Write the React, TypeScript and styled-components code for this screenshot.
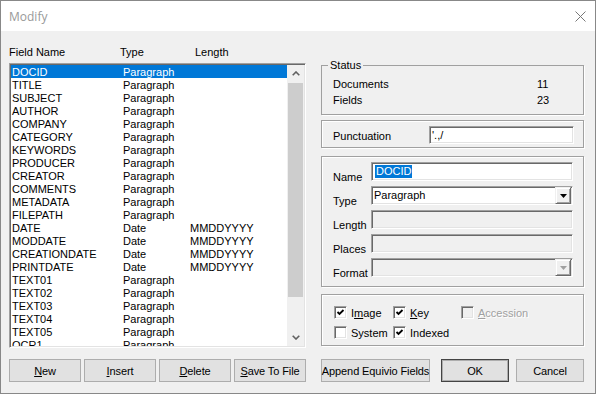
import React from 'react';
import styled, { createGlobalStyle } from 'styled-components';

const GlobalStyle = createGlobalStyle`
  html, body { margin: 0; padding: 0; background: #f0f0f0; }
  body { font-family: "Liberation Sans", Arial, sans-serif; font-size: 11px; color: #000; }
  * { box-sizing: border-box; }
`;

const Window = styled.div`
  width: 596px;
  height: 394px;
  border: 1px solid #888;
  background: #f0f0f0;
  display: flex;
  flex-direction: column;
  overflow: hidden;
`;

const TitleBar = styled.div`
  flex: none;
  height: 30px;
  background: #fff;
  display: flex;
  align-items: center;
  justify-content: space-between;
  padding: 0 9px 0 8px;
`;

const Title = styled.span`
  font-family: "Open Sans", "Noto Sans", sans-serif;
  font-size: 12px;
  color: #999;
`;

const CloseIcon = styled.svg`
  width: 11px;
  height: 11px;
  display: block;
`;

const Body = styled.div`
  flex: 1;
  display: flex;
  gap: 15px;
  padding-left: 8px;
`;

const LeftCol = styled.div`
  width: 297px;
  display: flex;
  flex-direction: column;
  padding-top: 15px;
`;

const RightCol = styled.div`
  width: 263px;
  display: flex;
  flex-direction: column;
  padding-top: 28px;
`;

const HeaderRow = styled.div`
  display: grid;
  grid-template-columns: 111px 75px auto;
  height: 13px;
  line-height: 13px;
`;

const sunken = `
  border: 1px solid;
  border-color: #a0a0a0 #fff #fff #a0a0a0;
  box-shadow: inset 1px 1px 0 #696969, inset -1px -1px 0 #e3e3e3;
`;

const ListBox = styled.div`
  margin-top: 4px;
  height: 285px;
  display: flex;
  background: #fff;
  padding: 1px;
  ${sunken}
`;

const Rows = styled.div`
  flex: 1;
  overflow: hidden;
`;

const Row = styled.div<{ $selected?: boolean }>`
  display: grid;
  grid-template-columns: 111px 67px auto;
  height: 13px;
  line-height: 12px;
  padding: 1px 0 0 1px;
  white-space: nowrap;
  background: ${p => (p.$selected ? '#0078d7' : 'transparent')};
  color: ${p => (p.$selected ? '#fff' : '#000')};
`;

const ScrollBar = styled.div`
  width: 17px;
  flex: none;
  background: #f0f0f0;
  display: flex;
  flex-direction: column;
`;

const ScrollArrow = styled.div`
  height: 17px;
  flex: none;
  display: flex;
  align-items: center;
  justify-content: center;
`;

const Track = styled.div`
  flex: 1;
  padding: 1px 1px 0 1px;
`;

const Thumb = styled.div`
  height: 214px;
  background: #cdcdcd;
`;

const ButtonRow = styled.div<{ $top: number }>`
  display: flex;
  margin-top: ${p => p.$top}px;
`;

const Button = styled.div<{ $w: number; $gap?: number; $default?: boolean }>`
  width: ${p => p.$w}px;
  height: 23px;
  margin-left: ${p => p.$gap ?? 0}px;
  display: flex;
  align-items: center;
  justify-content: center;
  background: #e1e1e1;
  border: 1px solid ${p => (p.$default ? '#444' : '#adadad')};
  box-shadow: ${p => (p.$default ? 'inset 0 0 0 1px #adadad' : 'none')};
  white-space: nowrap;
  letter-spacing: -0.1px;
  &:first-child { margin-left: 0; }
`;

const Group = styled.fieldset`
  margin: 0;
  padding: 0;
  min-width: 0;
  border: 1px solid #a0a0a0;
  box-shadow: 1px 1px 0 #fff;
`;

const Legend = styled.legend`
  margin-left: 6px;
  padding: 0 2px;
  line-height: 13px;
  font-size: 11px;
`;

const StatusGrid = styled.div`
  display: grid;
  grid-template-columns: 204px auto;
  row-gap: 3px;
  line-height: 13px;
  padding: 6px 0 7px 11px;
`;

const Box = styled.div<{ $top: number }>`
  margin-top: ${p => p.$top}px;
  border: 1px solid #a0a0a0;
  box-shadow: 1px 1px 0 #fff, inset 1px 1px 0 #fff;
`;

const PunctRow = styled.div`
  display: flex;
  align-items: center;
  padding: 5px 9px 3px 11px;
`;

const PunctLabel = styled.span`
  width: 96px;
  padding-top: 2px;
`;

const TextBox = styled.div<{ $w?: number; $h: number; $disabled?: boolean }>`
  width: ${p => (p.$w ? p.$w + 'px' : '100%')};
  height: ${p => p.$h}px;
  background: ${p => (p.$disabled ? '#f0f0f0' : '#fff')};
  ${sunken}
  display: flex;
  align-items: center;
  padding: 0 1px 0 2px;
  line-height: 13px;
  white-space: nowrap;
`;

const FieldGrid = styled.div`
  display: grid;
  grid-template-columns: 38px 202px;
  grid-auto-rows: 19px;
  row-gap: 5px;
  padding: 5px 10px 9px 11px;
`;

const FieldLabel = styled.span`
  align-self: end;
  line-height: 13px;
  margin-bottom: -3px;
`;

const Selected = styled.span`
  background: #0078d7;
  color: #fff;
  padding: 0 1px;
  margin-left: 1px;
`;

const ComboText = styled.span`
  flex: 1;
`;

const DropBtn = styled.div`
  width: 16px;
  height: 100%;
  flex: none;
  background: #f0f0f0;
  border: 1px solid;
  border-color: #f0f0f0 #696969 #696969 #f0f0f0;
  box-shadow: inset 1px 1px 0 #fff, inset -1px -1px 0 #a0a0a0;
  display: flex;
  align-items: center;
  justify-content: center;
`;

const CheckGrid = styled.div`
  display: grid;
  grid-template-columns: 59px 68px auto;
  grid-auto-rows: 13px;
  row-gap: 7px;
  padding: 11px 0 6px 12px;
`;

const CheckItem = styled.div<{ $disabled?: boolean }>`
  display: flex;
  align-items: center;
  gap: 4px;
  white-space: nowrap;
  color: ${p => (p.$disabled ? '#a0a0a0' : '#000')};
  text-shadow: ${p => (p.$disabled ? '1px 1px 0 #fff' : 'none')};
`;

const CheckBox = styled.span<{ $disabled?: boolean }>`
  width: 13px;
  height: 13px;
  flex: none;
  display: flex;
  align-items: center;
  justify-content: center;
  background: ${p => (p.$disabled ? '#f0f0f0' : '#fff')};
  ${sunken}
`;

const Check = () => (
  <svg width="9" height="9" viewBox="0 0 9 9">
    <path d="M1.5 4 L3.5 6 L7.5 2" fill="none" stroke="#000" strokeWidth="1.8" />
  </svg>
);

const Tri = ({ color }: { color: string }) => (
  <svg width="7" height="4" viewBox="0 0 7 4">
    <path d="M0 0 H7 L3.5 4 Z" fill={color} />
  </svg>
);

type Field = [string, string, string?];
const fields: Field[] = [
  ['DOCID', 'Paragraph'],
  ['TITLE', 'Paragraph'],
  ['SUBJECT', 'Paragraph'],
  ['AUTHOR', 'Paragraph'],
  ['COMPANY', 'Paragraph'],
  ['CATEGORY', 'Paragraph'],
  ['KEYWORDS', 'Paragraph'],
  ['PRODUCER', 'Paragraph'],
  ['CREATOR', 'Paragraph'],
  ['COMMENTS', 'Paragraph'],
  ['METADATA', 'Paragraph'],
  ['FILEPATH', 'Paragraph'],
  ['DATE', 'Date', 'MMDDYYYY'],
  ['MODDATE', 'Date', 'MMDDYYYY'],
  ['CREATIONDATE', 'Date', 'MMDDYYYY'],
  ['PRINTDATE', 'Date', 'MMDDYYYY'],
  ['TEXT01', 'Paragraph'],
  ['TEXT02', 'Paragraph'],
  ['TEXT03', 'Paragraph'],
  ['TEXT04', 'Paragraph'],
  ['TEXT05', 'Paragraph'],
  ['OCR1', 'Paragraph'],
];

export default function App() {
  return (
    <>
      <GlobalStyle />
      <Window>
        <TitleBar>
          <Title>Modify</Title>
          <CloseIcon viewBox="0 0 11 11">
            <path d="M0.5 0.5 L10.5 10.5 M10.5 0.5 L0.5 10.5" stroke="#777" strokeWidth="1" fill="none" />
          </CloseIcon>
        </TitleBar>
        <Body>
          <LeftCol>
            <HeaderRow>
              <span>Field Name</span>
              <span>Type</span>
              <span>Length</span>
            </HeaderRow>
            <ListBox>
              <Rows>
                {fields.map(([n, t, l], i) => (
                  <Row key={n} $selected={i === 0}>
                    <span>{n}</span>
                    <span>{t}</span>
                    <span>{l ?? ''}</span>
                  </Row>
                ))}
              </Rows>
              <ScrollBar>
                <ScrollArrow>
                  <svg width="8" height="5" viewBox="0 0 8 5">
                    <path d="M0.7 4.3 L4 1 L7.3 4.3" fill="none" stroke="#606060" strokeWidth="1.6" />
                  </svg>
                </ScrollArrow>
                <Track>
                  <Thumb />
                </Track>
                <ScrollArrow>
                  <svg width="8" height="5" viewBox="0 0 8 5">
                    <path d="M0.7 0.7 L4 4 L7.3 0.7" fill="none" stroke="#606060" strokeWidth="1.6" />
                  </svg>
                </ScrollArrow>
              </ScrollBar>
            </ListBox>
            <ButtonRow $top={11}>
              <Button $w={72}><span><u>N</u>ew</span></Button>
              <Button $w={72} $gap={3}><span><u>I</u>nsert</span></Button>
              <Button $w={72} $gap={3}><span><u>D</u>elete</span></Button>
              <Button $w={72} $gap={3}><span><u>S</u>ave To File</span></Button>
            </ButtonRow>
          </LeftCol>
          <RightCol>
            <Group>
              <Legend>Status</Legend>
              <StatusGrid>
                <span>Documents</span>
                <span>11</span>
                <span>Fields</span>
                <span>23</span>
              </StatusGrid>
            </Group>
            <Box $top={5}>
              <PunctRow>
                <PunctLabel>Punctuation</PunctLabel>
                <TextBox $w={145} $h={18}>'.,/</TextBox>
              </PunctRow>
            </Box>
            <Box $top={8}>
              <FieldGrid>
                <FieldLabel>Name</FieldLabel>
                <TextBox $h={19}><Selected>DOCID</Selected></TextBox>
                <FieldLabel>Type</FieldLabel>
                <TextBox $h={19}>
                  <ComboText>Paragraph</ComboText>
                  <DropBtn><Tri color="#000" /></DropBtn>
                </TextBox>
                <FieldLabel>Length</FieldLabel>
                <TextBox $h={19} $disabled />
                <FieldLabel>Places</FieldLabel>
                <TextBox $h={19} $disabled />
                <FieldLabel>Format</FieldLabel>
                <TextBox $h={19} $disabled>
                  <ComboText />
                  <DropBtn><Tri color="#a0a0a0" /></DropBtn>
                </TextBox>
              </FieldGrid>
            </Box>
            <Box $top={7}>
              <CheckGrid>
                <CheckItem>
                  <CheckBox><Check /></CheckBox>
                  <span>I<u>m</u>age</span>
                </CheckItem>
                <CheckItem>
                  <CheckBox><Check /></CheckBox>
                  <span><u>K</u>ey</span>
                </CheckItem>
                <CheckItem $disabled>
                  <CheckBox $disabled />
                  <span><u>A</u>ccession</span>
                </CheckItem>
                <CheckItem>
                  <CheckBox />
                  <span>System</span>
                </CheckItem>
                <CheckItem>
                  <CheckBox><Check /></CheckBox>
                  <span>Indexed</span>
                </CheckItem>
              </CheckGrid>
            </Box>
            <ButtonRow $top={13}>
              <Button $w={109}>Append Equivio Fields</Button>
              <Button $w={68} $gap={11} $default>OK</Button>
              <Button $w={68} $gap={7}>Cancel</Button>
            </ButtonRow>
          </RightCol>
        </Body>
      </Window>
    </>
  );
}
